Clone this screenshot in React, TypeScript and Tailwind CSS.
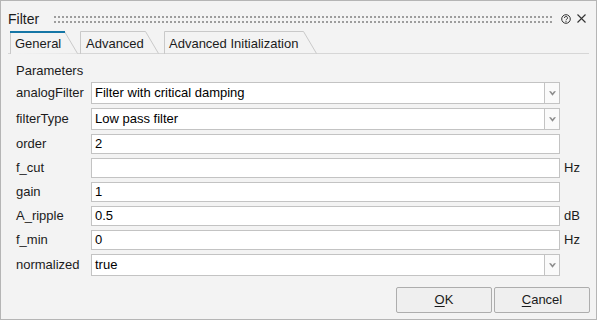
import React from "react";

function Tab({ label, w, selected, className }: { label: string; w: number; selected?: boolean; className: string }) {
  return (
    <div className={className}>
      <svg className="absolute left-0 top-0" width={w} height={23}>
        <path
          d={`M0.5 23 V0.5 H${w - 13.5} L${w - 0.5} 22.5`}
          fill={selected ? "#f3f3f3" : "none"}
          stroke="#c9c9c9"
          strokeWidth={1}
        />
        {selected && <rect x={0} y={0} width={w - 13} height={2} fill="#1576a6" />}
      </svg>
      <span className="relative leading-[16px]">{label}</span>
    </div>
  );
}

function Chevron() {
  return (
    <svg width="7" height="5" viewBox="0 0 7 5">
      <path d="M0 0.3 H2 L3.5 2.3 L5 0.3 H7 L3.5 4.8 Z" fill="#8c8c8c" />
    </svg>
  );
}

function Combo({ value }: { value: string }) {
  return (
    <div className="h-[22px] flex border border-[#c3c3c3] bg-white">
      <div className="flex-1 flex items-center pl-[3px] leading-[16px] text-black">{value}</div>
      <div className="w-[15px] border-l border-[#c3c3c3] bg-[#fafafa] flex items-center justify-center">
        <Chevron />
      </div>
    </div>
  );
}

function Field({ value }: { value: string }) {
  return (
    <div className="h-[20px] flex items-center border border-[#c3c3c3] bg-white pl-[3px] leading-[16px] text-black">
      {value}
    </div>
  );
}

function Label({ children }: { children: React.ReactNode }) {
  return <div className="leading-[16px] whitespace-nowrap">{children}</div>;
}

function Unit({ children }: { children?: React.ReactNode }) {
  return <div className="pl-[4px] leading-[16px]">{children}</div>;
}

export default function App() {
  return (
    <div className="w-[597px] h-[320px] bg-[#f3f3f3] border border-[#b5b5b5] flex flex-col text-[13px] text-[#1b1b1b] font-['Liberation_Sans',Arial,sans-serif] overflow-hidden">
      {/* Title bar */}
      <div className="h-[30px] pt-[5px] flex items-center shrink-0">
        <span className="ml-[7px] text-[14px] leading-[16px]">Filter</span>
        <svg className="ml-[15px] flex-1 h-[7px] self-start mt-[10px]">
          <defs>
            <pattern id="grip" width="4" height="5" patternUnits="userSpaceOnUse">
              <rect width="2" height="2" fill="#9d9d9d" />
            </pattern>
          </defs>
          <rect width="100%" height="7" fill="url(#grip)" />
        </svg>
        <svg className="ml-[8px]" width="10" height="10" viewBox="0 0 10 10">
          <circle cx="5" cy="5" r="4.3" fill="none" stroke="#333" strokeWidth="1" />
          <path d="M3.5 4 A1.5 1.5 0 1 1 5.6 5.3 C5.1 5.6 5 5.9 5 6.3" fill="none" stroke="#333" strokeWidth="1" />
          <rect x="4.5" y="7.1" width="1" height="1" fill="#333" />
        </svg>
        <svg className="ml-[6px] mr-[10px]" width="9" height="9" viewBox="0 0 9 9">
          <path d="M0.5 0.5 L8.5 8.5 M8.5 0.5 L0.5 8.5" stroke="#333" strokeWidth="1.1" />
        </svg>
      </div>

      {/* Tabs */}
      <div className="h-[22px] flex pl-[9px] shrink-0 relative z-10">
        <Tab label="General" w={68} selected className="relative w-[68px] h-[23px] flex items-center pl-[5px] pt-[2px]" />
        <Tab label="Advanced" w={79} className="relative w-[79px] h-[23px] flex items-center pl-[6px] pt-[2px] ml-[2px]" />
        <Tab label="Advanced Initialization" w={153} className="relative w-[153px] h-[23px] flex items-center pl-[5px] pt-[2px] ml-[5px]" />
      </div>
      <div className="h-px bg-[#d6d6d6] mx-[7px] shrink-0" />

      {/* Content */}
      <div className="pl-[15px] pt-[9px] flex-1 flex flex-col">
        <div className="leading-[16px]">Parameters</div>
        <div className="mt-[3px] grid grid-cols-[75px_469px_auto] gap-y-[4px] items-center">
          <Label>analogFilter</Label>
          <Combo value="Filter with critical damping" />
          <Unit />

          <Label>filterType</Label>
          <Combo value="Low pass filter" />
          <Unit />

          <Label>order</Label>
          <Field value="2" />
          <Unit />

          <Label>f_cut</Label>
          <Field value="" />
          <Unit>Hz</Unit>

          <Label>gain</Label>
          <Field value="1" />
          <Unit />

          <Label>A_ripple</Label>
          <Field value="0.5" />
          <Unit>dB</Unit>

          <Label>f_min</Label>
          <Field value="0" />
          <Unit>Hz</Unit>

          <Label>normalized</Label>
          <Combo value="true" />
          <Unit />
        </div>
      </div>

      {/* Buttons */}
      <div className="flex justify-end gap-[2px] pr-[6px] pb-[6px] shrink-0">
        <button className="w-[96px] h-[26px] border border-[#adadad] bg-[#efefef] rounded-[2px] leading-[16px] text-[#1b1b1b]">
          <span className="underline underline-offset-2">O</span>K
        </button>
        <button className="w-[96px] h-[26px] border border-[#adadad] bg-[#efefef] rounded-[2px] leading-[16px] text-[#1b1b1b]">
          <span className="underline underline-offset-2">C</span>ancel
        </button>
      </div>
    </div>
  );
}
